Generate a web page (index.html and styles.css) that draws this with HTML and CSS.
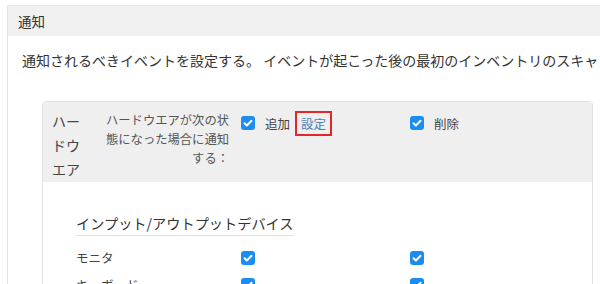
FILE: index.html
```html
<!DOCTYPE html>
<html lang="ja">
<head>
<meta charset="utf-8">
<link rel="stylesheet" href="styles.css">
</head>
<body>
<div class="panel">
  <div class="panel-head">通知</div>
  <div class="panel-body">
    <p class="intro">通知されるべきイベントを設定する。 イベントが起こった後の最初のインベントリのスキャンで通知が送信されます。</p>
    <div class="card">
      <div class="card-head">
        <div class="lead">
          <div class="cat">ハードウエア</div>
          <div class="desc">ハードウエアが次の状態になった場合に通知する：</div>
        </div>
        <div class="col">
          <span class="cb"><svg viewBox="0 0 14 14"><path d="M3.5 7.2l2.4 2.3 4.6-4.8"/></svg></span>
          <span class="opt">追加</span>
          <span class="link">設定</span>
        </div>
        <div class="col">
          <span class="cb"><svg viewBox="0 0 14 14"><path d="M3.5 7.2l2.4 2.3 4.6-4.8"/></svg></span>
          <span class="opt">削除</span>
        </div>
      </div>
      <div class="card-body">
        <div class="group-title"><span>インプット/アウトプットデバイス</span></div>
        <div class="row">
          <div class="name">モニタ</div>
          <div class="col"><span class="cb"><svg viewBox="0 0 14 14"><path d="M3.5 7.2l2.4 2.3 4.6-4.8"/></svg></span></div>
          <div class="col"><span class="cb"><svg viewBox="0 0 14 14"><path d="M3.5 7.2l2.4 2.3 4.6-4.8"/></svg></span></div>
        </div>
        <div class="row">
          <div class="name">キーボード</div>
          <div class="col"><span class="cb"><svg viewBox="0 0 14 14"><path d="M3.5 7.2l2.4 2.3 4.6-4.8"/></svg></span></div>
          <div class="col"><span class="cb"><svg viewBox="0 0 14 14"><path d="M3.5 7.2l2.4 2.3 4.6-4.8"/></svg></span></div>
        </div>
      </div>
    </div>
  </div>
</div>
</body>
</html>
```
FILE: styles.css
```css
html, body {
  margin: 0;
  padding: 0;
  overflow: hidden;
  background: #fff;
}
body {
  font-family: "Noto Sans CJK JP", "Noto Sans", sans-serif;
  color: #333;
  width: 600px;
  height: 284px;
}
.panel {
  margin: 5px 0 0 7px;
  width: 720px;
  border: 1px solid #e4e4e4;
}
.panel-head {
  height: 30px;
  line-height: 30px;
  background: #f0f0f0;
  padding-left: 10px;
  font-size: 13.5px;
  color: #333;
}
.panel-body {
  padding: 0 0 0 14px;
}
.intro {
  margin: 0;
  padding-top: 14px;
  font-size: 14px;
  line-height: 20px;
  white-space: nowrap;
  color: #333;
}
.card {
  margin: 31px 0 0 20px;
  width: 549px;
  border: 1px solid #e3e3e3;
  border-radius: 4px;
  overflow: hidden;
}
.card-head {
  display: flex;
  background: #efefef;
  height: 80px;
}
.lead {
  display: flex;
  width: 198px;
  padding: 7px 0 0 9px;
  box-sizing: border-box;
}
.cat {
  width: 30px;
  font-size: 14px;
  line-height: 24px;
  color: #444;
  word-break: break-all;
}
.desc {
  margin: 2px 0 0 23px;
  width: 124px;
  font-size: 12.3px;
  line-height: 19px;
  text-align: right;
  color: #555;
  word-break: break-all;
}
.col {
  width: 169px;
  display: flex;
  align-items: center;
  height: 28px;
  margin-top: 7px;
}
.cb {
  width: 14px;
  height: 14px;
  border-radius: 3px;
  background: #1a8cf2;
  display: inline-flex;
  flex: none;
}
.cb svg {
  width: 14px;
  height: 14px;
}
.cb path {
  fill: none;
  stroke: #fff;
  stroke-width: 2;
  stroke-linecap: round;
  stroke-linejoin: round;
}
.opt {
  margin-left: 10px;
  font-size: 12.5px;
  color: #444;
}
.link {
  margin-left: 5px;
  border: 2px solid #e3262b;
  padding: 0 4px;
  height: 21px;
  line-height: 21px;
  font-size: 12.5px;
  color: #4a7fb5;
}
.card-body {
  padding: 28px 0 0 33px;
  height: 120px;
}
.group-title span {
  display: inline-block;
  font-size: 14.2px;
  line-height: 21px;
  color: #333;
  border-bottom: 1px solid #e0e0e0;
  padding-bottom: 1px;
}
.row {
  display: flex;
  align-items: center;
  height: 27px;
  margin-top: 8px;
}
.row + .row {
  margin-top: 0;
}
.row .col {
  margin-top: 0;
  height: 27px;
}
.name {
  width: 165px;
  font-size: 12.5px;
  color: #444;
}
```
